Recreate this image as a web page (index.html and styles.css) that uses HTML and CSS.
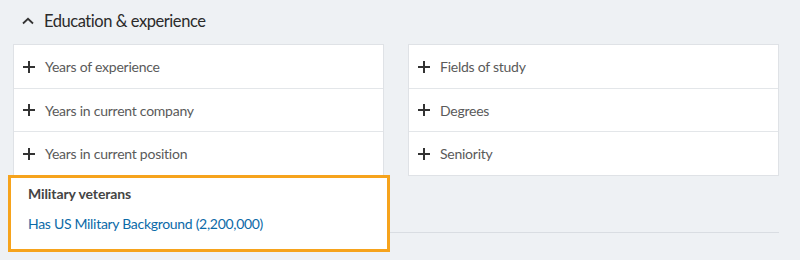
FILE: index.html
```html
<!DOCTYPE html>
<html>
<head>
<meta charset="utf-8">
<link rel="stylesheet" href="styles.css">
</head>
<body>
<div class="page">
  <div class="section-head">
    <svg class="chevron" width="12" height="8" viewBox="0 0 12 8"><path d="M1 6.5 L6 1.8 L11 6.5" fill="none" stroke="#333" stroke-width="1.8"/></svg>
    <span class="section-title">Education &amp; experience</span>
  </div>
  <div class="filters">
    <div class="col">
      <div class="card">
        <div class="row"><span class="plus"></span><span class="label">Years of experience</span></div>
        <div class="row"><span class="plus"></span><span class="label">Years in current company</span></div>
        <div class="row"><span class="plus"></span><span class="label">Years in current position</span></div>
      </div>
      <div class="military">
        <div class="military-title">Military veterans</div>
        <a class="military-link" href="#">Has US Military Background (2,200,000)</a>
      </div>
    </div>
    <div class="col">
      <div class="card">
        <div class="row"><span class="plus"></span><span class="label">Fields of study</span></div>
        <div class="row"><span class="plus"></span><span class="label">Degrees</span></div>
        <div class="row"><span class="plus"></span><span class="label">Seniority</span></div>
      </div>
    </div>
  </div>
</div>
</body>
</html>
```
FILE: styles.css
```css
html, body {
  margin: 0;
  padding: 0;
  background: #eef1f4;
}
body {
  font-family: Lato, "Noto Sans", sans-serif;
  width: 800px;
  height: 260px;
  overflow: hidden;
}
.section-head {
  height: 44px;
  display: flex;
  align-items: center;
  padding-left: 22px;
  box-sizing: border-box;
  padding-bottom: 3px;
}
.chevron {
  margin-right: 10px;
  margin-top: 0;
}
.section-title {
  font-size: 16.5px;
  letter-spacing: -0.45px;
  color: #2b2b2b;
}
.filters {
  margin-left: 13px;
  width: 766px;
  display: grid;
  grid-template-columns: 1fr 1fr;
  column-gap: 24px;
  border-bottom: 1px solid #d9dde2;
  align-items: start;
}
.col {
  display: flex;
  flex-direction: column;
}
.card {
  background: #fff;
  border: 1px solid #dfe2e6;
}
.row {
  height: 43px;
  display: flex;
  align-items: center;
  padding-left: 9px;
  border-top: 1px solid #e3e6e9;
}
.row:first-child {
  border-top: none;
}
.row:nth-child(2) {
  height: 42px;
}
.plus {
  position: relative;
  width: 12px;
  height: 12px;
  margin-right: 10px;
}
.plus::before, .plus::after {
  content: "";
  position: absolute;
  background: #333;
}
.plus::before {
  left: 0;
  top: 5px;
  width: 12px;
  height: 2px;
}
.plus::after {
  left: 5px;
  top: 0;
  width: 2px;
  height: 12px;
}
.label {
  font-size: 14px;
  letter-spacing: -0.25px;
  color: #5a5a5a;
}
.military {
  position: relative;
  z-index: 1;
  margin: -1px -6px -20px -5px;
  height: 77px;
  box-sizing: border-box;
  border: 3px solid #f6a31c;
  background: #fff;
  padding: 6px 17px 0;
}
.military-title {
  font-size: 14px;
  font-weight: bold;
  letter-spacing: -0.1px;
  color: #444;
  line-height: 20px;
}
.military-link {
  display: block;
  margin-top: 10px;
  font-size: 14px;
  letter-spacing: -0.3px;
  line-height: 20px;
  color: #0b6aa8;
  text-decoration: none;
}
```
